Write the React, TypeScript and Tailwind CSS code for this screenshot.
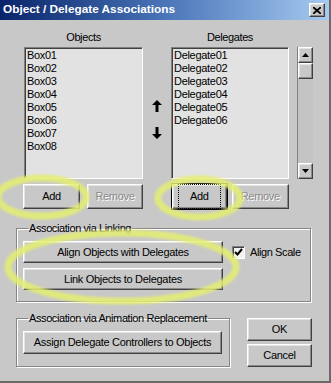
import React from "react";

const raised =
  "border border-t-white border-l-white border-r-[#404040] border-b-[#404040] shadow-[inset_-1px_-1px_0_#8a8a8a,inset_1px_1px_0_#e4e4e4] bg-[#c8c8c8]";
const sunken =
  "border border-t-[#808080] border-l-[#808080] border-r-white border-b-white shadow-[inset_1px_1px_0_#404040]";

const Btn = ({
  label,
  className = "",
  disabled = false,
  focused = false,
}: {
  label: string;
  className?: string;
  disabled?: boolean;
  focused?: boolean;
}) => (
  <div
    className={`${raised} ${focused ? "outline outline-1 outline-black" : ""} flex items-center justify-center whitespace-nowrap tracking-[-0.3px] ${className}`}
  >
    <span
      className={`${disabled ? "text-[#8a8a8a] [text-shadow:1px_1px_0_#fff]" : ""} ${focused ? "outline-1 outline-dotted outline-black outline-offset-[3px] px-[8px]" : ""}`}
    >
      {label}
    </span>
  </div>
);

const Arrow = ({ down = false }: { down?: boolean }) => (
  <svg width="10" height="12" viewBox="0 0 10 12" className={down ? "rotate-180" : ""}>
    <path d="M5 0 L10 5 L6.5 5 L6.5 12 L3.5 12 L3.5 5 L0 5 Z" fill="#000" />
  </svg>
);

const ListBox = ({ items, width }: { items: string[]; width: string }) => (
  <div className={`${sunken} ${width} h-[132px] bg-[#e2e2e2] pl-[2px] pt-[1px] tracking-[-0.3px]`}>
    {items.map((t) => (
      <div key={t} className="leading-[13px] text-[11px]">
        {t}
      </div>
    ))}
  </div>
);

const Tri = ({ down = false }: { down?: boolean }) => (
  <svg width="7" height="4" viewBox="0 0 7 4">
    <path d={down ? "M0 0 L7 0 L3.5 4 Z" : "M0 4 L7 4 L3.5 0 Z"} fill="#000" />
  </svg>
);

const ScrollBar = () => (
  <div className="flex h-[132px] w-[16px] flex-col border-l border-[#808080]">
    <div className={`${raised} flex h-[16px] items-center justify-center`}>
      <Tri />
    </div>
    <div className={`${raised} h-[16px]`} />
    <div className="flex-1 bg-[#c4c4c4]" />
    <div className={`${raised} flex h-[16px] items-center justify-center`}>
      <Tri down />
    </div>
  </div>
);

export default function App() {
  const objects = ["Box01", "Box02", "Box03", "Box04", "Box05", "Box06", "Box07", "Box08"];
  const delegates = ["Delegate01", "Delegate02", "Delegate03", "Delegate04", "Delegate05", "Delegate06"];

  return (
    <div className="relative h-[383px] w-[331px] overflow-hidden whitespace-nowrap border-b-2 border-r-2 border-[#6a6a6a] bg-[#c8c8c8] font-['Liberation_Sans',Arial,sans-serif] text-[11px] tracking-[-0.4px] text-black">
      {/* title bar */}
      <div className="flex h-[20px] items-center justify-between bg-linear-to-r from-[#0a246a] via-[#4a75b8] to-[#a6caf0] pl-[3px] pr-[4px]">
        <span className="text-[11.8px] font-bold tracking-normal text-white">Object / Delegate Associations</span>
        <div className={`${raised} flex h-[14px] w-[16px] items-center justify-center`}>
          <svg width="8" height="7" viewBox="0 0 8 7">
            <path d="M0 0 L8 7 M8 0 L0 7" stroke="#000" strokeWidth="1.8" />
          </svg>
        </div>
      </div>

      {/* lists */}
      <div className="flex pl-[24px] pt-[10px]">
        <div className="flex w-[119px] flex-col">
          <div className="h-[14px] text-center leading-[14px]">Objects</div>
          <div className="mt-[3px]">
            <ListBox items={objects} width="w-[119px]" />
          </div>
          <div className="-ml-[1px] mt-[5px] flex gap-[7px]">
            <Btn label="Add" className="h-[25px] w-[57px]" />
            <Btn label="Remove" disabled className="h-[25px] w-[56px]" />
          </div>
        </div>

        <div className="flex w-[28px] flex-col items-center pt-[70px]">
          <Arrow />
          <div className="h-[15px]" />
          <Arrow down />
        </div>

        <div className="flex w-[118px] flex-col">
          <div className="h-[14px] text-center leading-[14px]">Delegates</div>
          <div className="mt-[3px]">
            <ListBox items={delegates} width="w-[118px]" />
          </div>
          <div className="ml-[1px] mt-[5px] flex gap-[5px]">
            <Btn label="Add" focused className="h-[25px] w-[55px]" />
            <Btn label="Remove" disabled className="h-[25px] w-[58px]" />
          </div>
        </div>

        <div className="ml-[8px] mt-[17px]">
          <ScrollBar />
        </div>
      </div>

      {/* association via linking */}
      <fieldset className="ml-[16px] mt-[12px] w-[295px] border border-[#868686] px-[6px] pb-[11px] pt-[6px] shadow-[1px_1px_0_#fff,inset_1px_1px_0_#fff]">
        <legend className="ml-[5px] px-[1px] leading-[14px]">Association via Linking</legend>
        <div className="flex">
          <div className="flex flex-col gap-[5px]">
            <Btn label="Align Objects with Delegates" className="h-[22px] w-[200px]" />
            <Btn label="Link Objects to Delegates" className="h-[22px] w-[200px]" />
          </div>
          <div className="ml-[9px] mt-[4px] flex h-[14px] items-center gap-[5px]">
            <div className={`${sunken} flex h-[13px] w-[13px] items-center justify-center bg-[#f2f2f2]`}>
              <svg width="9" height="8" viewBox="0 0 9 8">
                <path d="M1 4 L3.5 6.5 L8 1" stroke="#000" strokeWidth="2" fill="none" />
              </svg>
            </div>
            <span>Align Scale</span>
          </div>
        </div>
      </fieldset>

      {/* bottom row */}
      <div className="ml-[16px] mt-[9px] flex">
        <fieldset className="w-[214px] border border-[#868686] px-[6px] pb-[8px] pt-[6px] shadow-[1px_1px_0_#fff,inset_1px_1px_0_#fff]">
          <legend className="ml-[5px] px-[1px] leading-[14px]">Association via Animation Replacement</legend>
          <Btn label="Assign Delegate Controllers to Objects" className="h-[23px] w-[199px]" />
        </fieldset>
        <div className="ml-[17px] mt-[7px] flex flex-col gap-[3px]">
          <Btn label="OK" className="h-[23px] w-[65px]" />
          <Btn label="Cancel" className="h-[23px] w-[65px]" />
        </div>
      </div>

      {/* highlight annotations */}
      <svg className="pointer-events-none absolute inset-0" width="331" height="383">
        <defs>
          <filter id="soft" x="-20%" y="-20%" width="140%" height="140%">
            <feGaussianBlur stdDeviation="1.2" />
          </filter>
        </defs>
        <g fill="none" stroke="#e4ef72" strokeWidth="7" strokeOpacity="0.85" filter="url(#soft)">
          <ellipse cx="42" cy="197" rx="44" ry="19" />
          <ellipse cx="199" cy="198" rx="41" ry="19" />
          <ellipse cx="122" cy="267" rx="114" ry="34" />
        </g>
      </svg>
    </div>
  );
}
